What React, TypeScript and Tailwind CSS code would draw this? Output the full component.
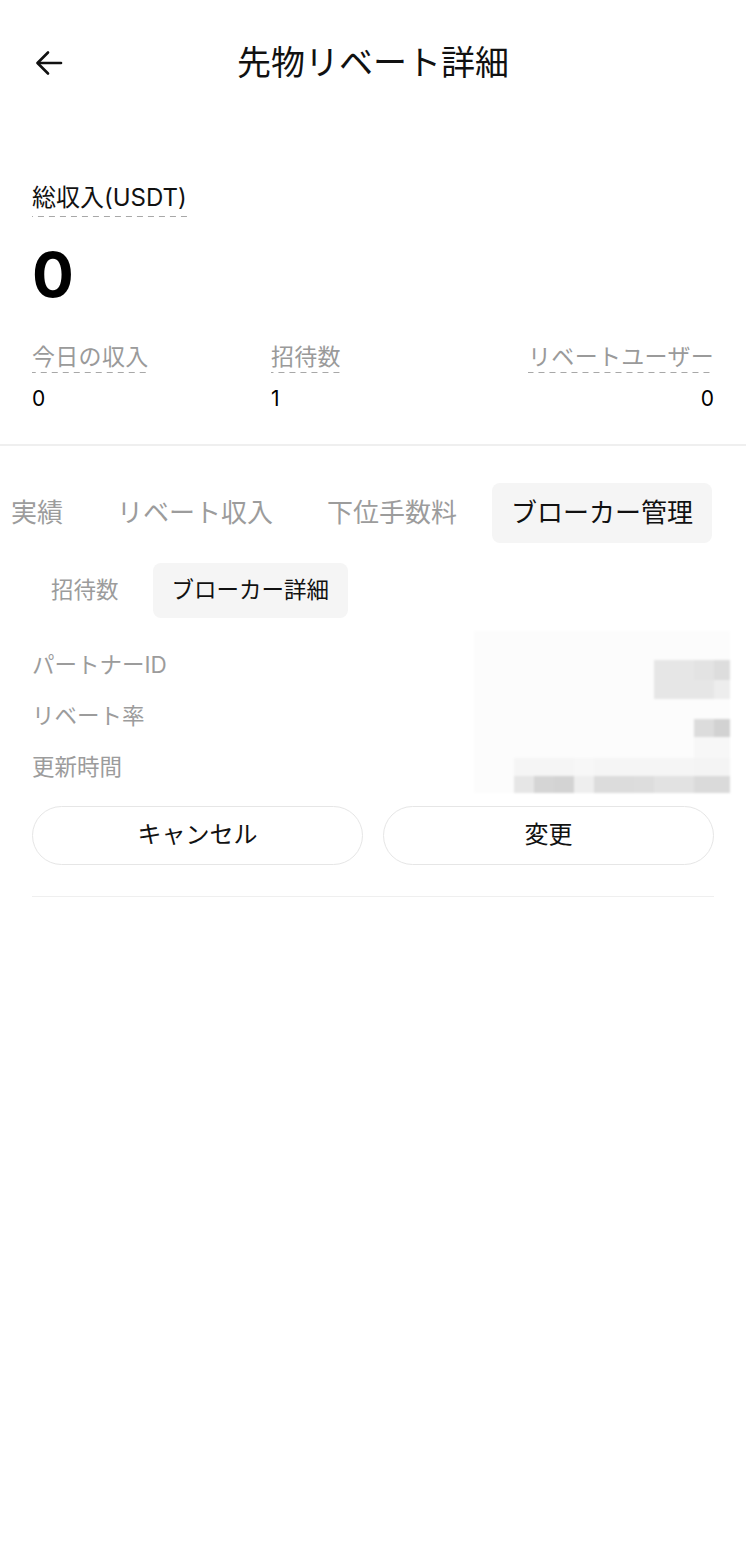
const F = "bg-[#fcfcfc]";
const mosaicRows: { h: string; cells: string[] }[] = [
  { h: "h-[29px]", cells: Array(13).fill(F) },
  {
    h: "h-[20px]",
    cells: [F, F, F, F, F, F, F, F, F, "bg-[#e6e6e6]", "bg-[#e6e6e6]", "bg-[#e3e3e3]", "bg-[#dddddd]"],
  },
  {
    h: "h-[19px]",
    cells: [F, F, F, F, F, F, F, F, F, "bg-[#e6e6e6]", "bg-[#e6e6e6]", "bg-[#e6e6e6]", "bg-[#ededed]"],
  },
  { h: "h-[20px]", cells: Array(13).fill(F) },
  {
    h: "h-[18px]",
    cells: [F, F, F, F, F, F, F, F, F, F, F, "bg-[#dcdcdc]", "bg-[#d2d2d2]"],
  },
  {
    h: "h-[21px]",
    cells: [F, F, F, F, F, F, F, F, F, F, F, "bg-[#f7f7f7]", "bg-[#f7f7f7]"],
  },
  {
    h: "h-[18px]",
    cells: [
      F,
      F,
      "bg-[#f5f5f5]",
      "bg-[#f5f5f5]",
      "bg-[#f5f5f5]",
      "bg-[#f7f7f7]",
      "bg-[#f5f5f5]",
      "bg-[#f5f5f5]",
      "bg-[#f5f5f5]",
      "bg-[#f5f5f5]",
      "bg-[#f5f5f5]",
      "bg-[#f4f4f4]",
      "bg-[#f4f4f4]",
    ],
  },
  {
    h: "h-[17px]",
    cells: [
      F,
      F,
      "bg-[#e6e6e6]",
      "bg-[#d5d5d5]",
      "bg-[#d3d3d3]",
      "bg-[#eeeeee]",
      "bg-[#dcdcdc]",
      "bg-[#dcdcdc]",
      "bg-[#dddddd]",
      "bg-[#e2e2e2]",
      "bg-[#e2e2e2]",
      "bg-[#dadada]",
      "bg-[#dadada]",
    ],
  },
];

const dash =
  "bg-[linear-gradient(to_right,#a8a8a8_6px,transparent_6px)] bg-[length:11px_1.5px] bg-repeat-x bg-bottom";

function Stat({ label, value, align }: { label: string; value: string; align?: "end" }) {
  return (
    <div className={align === "end" ? "flex flex-col items-end" : "flex flex-col items-start"}>
      <div className={`text-[23px] leading-[28px] pb-[2px] tracking-[0.3px] text-[#9a9a9a] ${dash}`}>{label}</div>
      <div className="mt-[13px] text-[21px] leading-[26px]">{value}</div>
    </div>
  );
}

export default function App() {
  return (
    <div className="w-[746px] h-[1546px] bg-white text-black font-[Inter,'Noto_Sans_CJK_JP',sans-serif] overflow-hidden">
      {/* Header */}
      <div className="h-[126px] grid grid-cols-[1fr_auto_1fr] items-center px-[34px]">
        <svg
          width="30"
          height="30"
          viewBox="0 0 30 30"
          fill="none"
          stroke="#111"
          strokeWidth="2.6"
          strokeLinecap="round"
          strokeLinejoin="round"
        >
          <path d="M4 15h23" />
          <path d="M14 4.5L3.5 15L14 25.5" />
        </svg>
        <div className="text-[34px] leading-none text-[#111]">先物リベート詳細</div>
        <div />
      </div>

      {/* Total income */}
      <div className="px-[32px] pt-[57px]">
        <div className={`inline-block text-[24px] leading-[30px] pb-[4px] text-[#111] ${dash}`}>総収入(USDT)</div>
        <div className="mt-[28px] text-[62px] leading-[60px] font-bold">0</div>
        <div className="mt-[38px] grid grid-cols-[239px_1fr_auto]">
          <Stat label="今日の収入" value="0" />
          <Stat label="招待数" value="1" />
          <Stat label="リベートユーザー" value="0" align="end" />
        </div>
      </div>

      <div className="mt-[32px] h-[1.5px] bg-[#efefef]" />

      {/* Tabs */}
      <div className="mt-[37px] flex justify-end pr-[34px] gap-[16px] whitespace-nowrap">
        <div className="shrink-0 h-[60px] px-[19px] flex items-center text-[26px] text-[#9c9c9c]">実績</div>
        <div className="shrink-0 h-[60px] px-[19px] flex items-center text-[26px] text-[#9c9c9c]">リベート収入</div>
        <div className="shrink-0 h-[60px] px-[19px] flex items-center text-[26px] text-[#9c9c9c]">下位手数料</div>
        <div className="shrink-0 h-[60px] px-[19px] flex items-center text-[26px] text-[#111] bg-[#f5f5f5] rounded-[8px]">
          ブローカー管理
        </div>
      </div>

      {/* Sub tabs */}
      <div className="mt-[20px] px-[32px] flex gap-[15px]">
        <div className="h-[55px] px-[19px] flex items-center text-[22.5px] text-[#9c9c9c]">招待数</div>
        <div className="h-[55px] px-[19px] flex items-center text-[22.5px] text-[#111] bg-[#f5f5f5] rounded-[8px]">
          ブローカー詳細
        </div>
      </div>

      {/* Info */}
      <div className="mt-[13px] pl-[32px] pr-[16px] flex">
        <div className="pt-[9px] flex flex-col">
          <div className="h-[51px] flex items-center text-[22.5px] text-[#9c9c9c]">パートナーID</div>
          <div className="h-[51px] flex items-center text-[22.5px] text-[#9c9c9c]">リベート率</div>
          <div className="h-[51px] flex items-center text-[22.5px] text-[#9c9c9c]">更新時間</div>
        </div>
        <div className="ml-auto flex flex-col blur-[0.8px]">
          {mosaicRows.map((r, i) => (
            <div key={i} className={`flex ${r.h}`}>
              {r.cells.map((c, j) => (
                <div key={j} className={`${j === 12 ? "w-[16px]" : "w-[20px]"} ${c}`} />
              ))}
            </div>
          ))}
        </div>
      </div>

      {/* Buttons */}
      <div className="mt-[13px] px-[32px] flex gap-[20px]">
        <button className="flex-1 h-[59px] rounded-full border border-[#e6e6e6] bg-white text-[24px] text-[#111]">
          キャンセル
        </button>
        <button className="flex-1 h-[59px] rounded-full border border-[#e6e6e6] bg-white text-[24px] text-[#111]">
          変更
        </button>
      </div>

      <div className="mt-[31px] mx-[32px] h-[1.5px] bg-[#efefef]" />
    </div>
  );
}
